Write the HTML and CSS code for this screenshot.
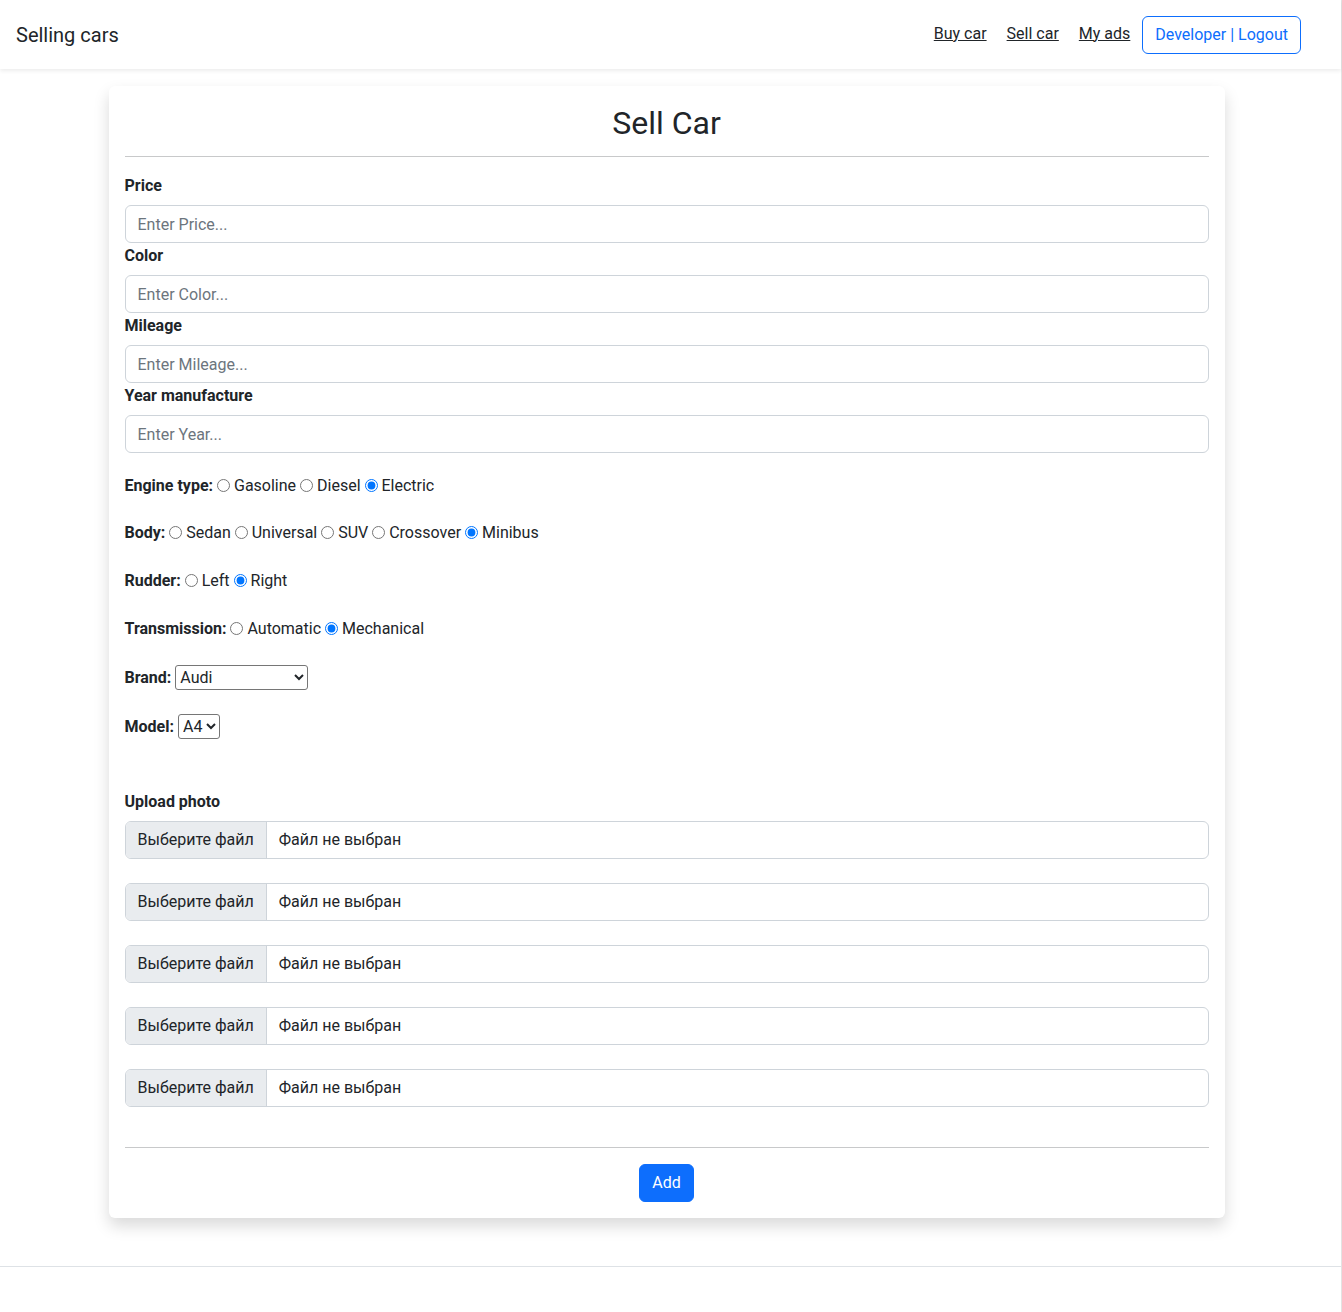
FILE: index.html
```html
<!DOCTYPE html>
<html lang="en">
<head>
<meta charset="utf-8">
<title>Selling cars</title>
<link rel="stylesheet" href="styles.css">
</head>
<body>
<div class="page">
  <header class="navbar">
    <a class="brand" href="#">Selling cars</a>
    <nav class="nav">
      <a class="nav-link" href="#">Buy car</a>
      <a class="nav-link" href="#">Sell car</a>
      <a class="nav-link" href="#">My ads</a>
      <button class="btn-outline" type="button">Developer | Logout</button>
    </nav>
  </header>

  <main class="main">
    <form class="card">
      <h2 class="title">Sell Car</h2>
      <hr class="divider">

      <div class="field">
        <label class="label">Price</label>
        <input class="control" type="text" placeholder="Enter Price...">
      </div>
      <div class="field">
        <label class="label">Color</label>
        <input class="control" type="text" placeholder="Enter Color...">
      </div>
      <div class="field">
        <label class="label">Mileage</label>
        <input class="control" type="text" placeholder="Enter Mileage...">
      </div>
      <div class="field">
        <label class="label">Year manufacture</label>
        <input class="control" type="text" placeholder="Enter Year...">
      </div>

      <div class="options first">
        <b>Engine type:</b>
        <input type="radio" name="engine" id="e1"> <label for="e1">Gasoline</label>
        <input type="radio" name="engine" id="e2"> <label for="e2">Diesel</label>
        <input type="radio" name="engine" id="e3" checked> <label for="e3">Electric</label>
      </div>
      <div class="options">
        <b>Body:</b>
        <input type="radio" name="body" id="b1"> <label for="b1">Sedan</label>
        <input type="radio" name="body" id="b2"> <label for="b2">Universal</label>
        <input type="radio" name="body" id="b3"> <label for="b3">SUV</label>
        <input type="radio" name="body" id="b4"> <label for="b4">Crossover</label>
        <input type="radio" name="body" id="b5" checked> <label for="b5">Minibus</label>
      </div>
      <div class="options">
        <b>Rudder:</b>
        <input type="radio" name="rudder" id="r1"> <label for="r1">Left</label>
        <input type="radio" name="rudder" id="r2" checked> <label for="r2">Right</label>
      </div>
      <div class="options">
        <b>Transmission:</b>
        <input type="radio" name="trans" id="t1"> <label for="t1">Automatic</label>
        <input type="radio" name="trans" id="t2" checked> <label for="t2">Mechanical</label>
      </div>
      <div class="options select-row">
        <b>Brand:</b>
        <select class="select brand-select">
          <option>Audi</option>
          <option>BMW</option>
          <option>Mercedes-Benz</option>
        </select>
      </div>
      <div class="options select-row model-row">
        <b>Model:</b>
        <select class="select">
          <option>A4</option>
          <option>A6</option>
        </select>
      </div>

      <div class="upload">
        <label class="label">Upload photo</label>
        <div class="file"><span class="file-btn">Выберите файл</span><span class="file-name">Файл не выбран</span></div>
        <div class="file"><span class="file-btn">Выберите файл</span><span class="file-name">Файл не выбран</span></div>
        <div class="file"><span class="file-btn">Выберите файл</span><span class="file-name">Файл не выбран</span></div>
        <div class="file"><span class="file-btn">Выберите файл</span><span class="file-name">Файл не выбран</span></div>
        <div class="file"><span class="file-btn">Выберите файл</span><span class="file-name">Файл не выбран</span></div>
      </div>

      <hr class="divider bottom">
      <div class="actions">
        <button class="btn-primary" type="button">Add</button>
      </div>
    </form>
  </main>

  <footer class="footer"></footer>
</div>
</body>
</html>
```

FILE: styles.css
```css
* { box-sizing: border-box; }

html, body {
  margin: 0;
  padding: 0;
}

body {
  font-family: Roboto, "Noto Sans", sans-serif;
  font-size: 16px;
  line-height: 24px;
  color: #212529;
  background: #fff;
}

.page {
  border-right: 1px solid #e3e3e3;
  min-height: 1312px;
}

.navbar {
  height: 69px;
  display: flex;
  align-items: center;
  justify-content: space-between;
  padding: 0 40px 0 16px;
  background: #fff;
  box-shadow: 0 2px 4px rgba(0, 0, 0, 0.075);
  position: relative;
  z-index: 1;
}

.brand {
  font-size: 20px;
  line-height: 30px;
  color: #212529;
  text-decoration: none;
}

.nav {
  display: flex;
  align-items: center;
}

.nav-link {
  color: #212529;
  text-decoration: underline;
  margin-right: 20px;
  font-size: 16px;
  margin-top: -2px;
}

.nav-link:nth-child(3) { margin-right: 12px; }

.btn-outline {
  font-family: inherit;
  font-size: 16px;
  line-height: 24px;
  color: #0d6efd;
  background: #fff;
  border: 1px solid #0d6efd;
  border-radius: 6px;
  padding: 6px 12px;
  height: 38px;
}

.main {
  display: flex;
  justify-content: center;
  padding: 17px 8px 48px 0;
}

.card {
  width: 1116px;
  background: #fff;
  border-radius: 6px;
  box-shadow: 0 8px 16px rgba(0, 0, 0, 0.15);
  padding: 16px;
}

.title {
  margin: 2px 0 0;
  text-align: center;
  font-size: 32px;
  line-height: 38px;
  font-weight: 400;
}

.divider {
  border: 0;
  border-top: 1px solid #c8c9ca;
  margin: 14px 0 16px;
}

.divider.bottom { margin-top: 40px; margin-bottom: 16px; }

.label {
  display: block;
  font-weight: 700;
  padding-top: 1px;
  margin-bottom: 7px;
}

.control {
  display: block;
  width: 100%;
  height: 38px;
  padding: 6px 12px;
  font-family: inherit;
  font-size: 16px;
  line-height: 24px;
  color: #212529;
  border: 1px solid #ced4da;
  border-radius: 6px;
  background: #fff;
}

.control::placeholder { color: #6c757d; }

.options {
  margin-bottom: 24px;
  line-height: 24px;
  height: 24px;
}

.options.first { margin-top: 21px; margin-bottom: 23px; }

.options input[type="radio"] {
  margin: 0;
  vertical-align: -1px;
}

.select-row {
  height: 25px;
  display: flex;
  align-items: center;
}

.select-row b { margin-right: 4px; }

.select {
  font-family: inherit;
  font-size: 16px;
  height: 25px;
  color: #212529;
  border: 1px solid #767676;
  border-radius: 3px;
  background: #fff;
}

.brand-select { width: 133px; }

.model-row { margin-bottom: 50px; }

.file {
  display: flex;
  height: 38px;
  border: 1px solid #ced4da;
  border-radius: 6px;
  overflow: hidden;
  margin-bottom: 24px;
}

.file:last-child { margin-bottom: 0; }

.file-btn {
  background: #e9ecef;
  padding: 6px 12px;
  border-right: 1px solid #ced4da;
  white-space: nowrap;
}

.file-name {
  padding: 6px 12px;
}

.actions {
  display: flex;
  justify-content: center;
}

.btn-primary {
  font-family: inherit;
  font-size: 16px;
  line-height: 24px;
  color: #fff;
  background: #0d6efd;
  border: 1px solid #0d6efd;
  border-radius: 6px;
  padding: 6px 12px;
  height: 38px;
}

.footer {
  border-top: 1px solid #dee2e6;
}
```
